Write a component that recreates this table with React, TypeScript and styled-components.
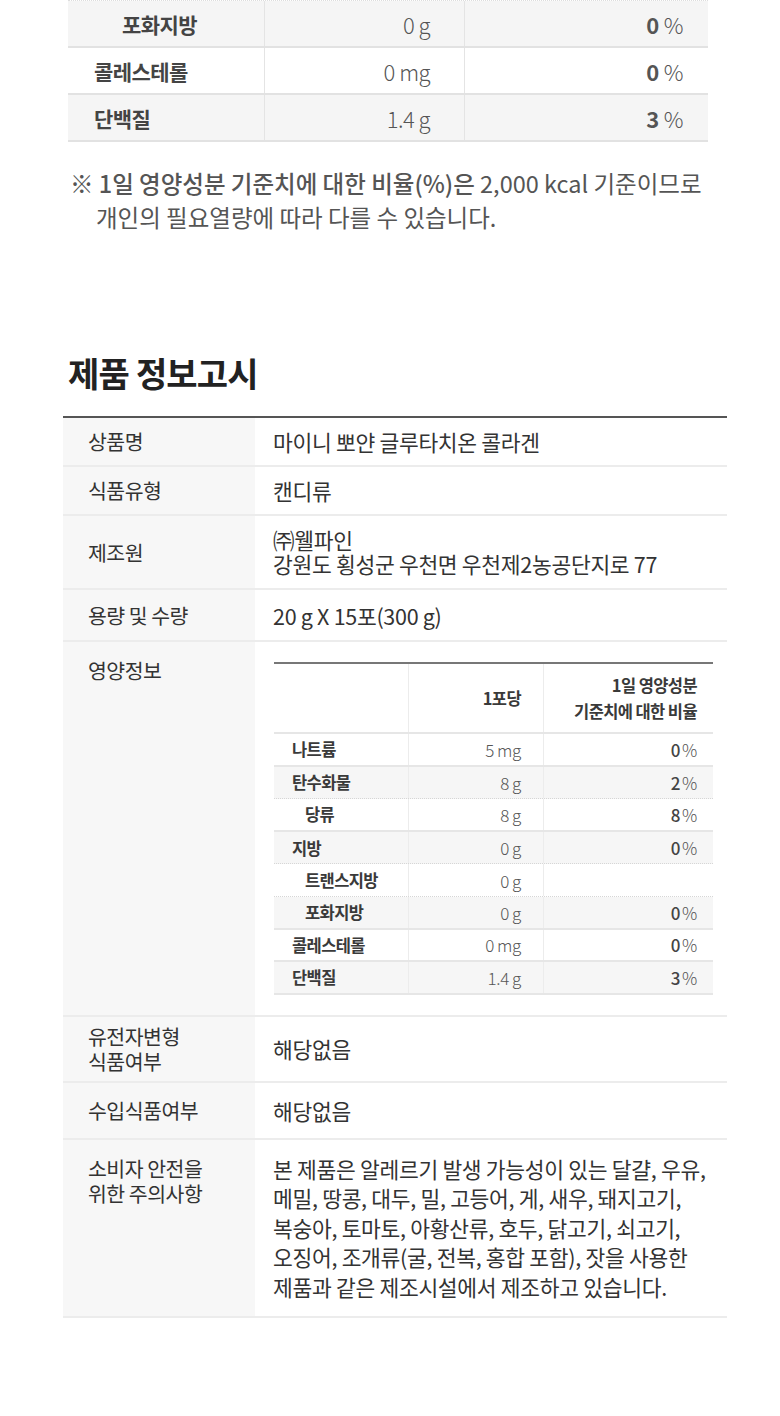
import React from "react";
import styled, { createGlobalStyle, css } from "styled-components";

const Global = createGlobalStyle`
  html, body { margin: 0; padding: 0; background: #fff; }
  body { font-family: "Noto Sans CJK KR", "Noto Sans", sans-serif; color: #333; }
  * { box-sizing: border-box; }
`;

const Page = styled.div`
  width: 780px;
  height: 1416px;
  overflow: hidden;
  background: #fff;
`;

/* ---------- top (continued) nutrition table ---------- */
const TopTable = styled.div`
  margin-left: 68px;
  width: 640px;
  border-top: 1px dotted #ddd;
`;

const TopRow = styled.div<{ $shade?: boolean }>`
  display: grid;
  grid-template-columns: 196px 200px 244px;
  height: 47px;
  background: ${(p) => (p.$shade ? "#f5f5f5" : "#fff")};
  border-bottom: 2px solid #e2e2e2;
`;

const TopLabel = styled.div<{ $indent?: boolean }>`
  display: flex;
  align-items: center;
  padding-left: ${(p) => (p.$indent ? "54px" : "26px")};
  font-size: 21px;
  font-weight: 700;
  color: #444;
  letter-spacing: -0.6px;
`;

const TopValue = styled.div`
  display: flex;
  align-items: center;
  justify-content: flex-end;
  padding-right: 34px;
  border-left: 1px solid #e4e4e4;
  font-size: 22px;
  font-weight: 300;
  color: #555;
  letter-spacing: -0.5px;
`;

const TopPercent = styled(TopValue)`
  padding-right: 25px;
  gap: 5px;
`;

const Strong = styled.span`
  font-weight: 700;
  color: #555;
`;

const Note = styled.p`
  margin: 24px 0 0 70px;
  font-size: 23.5px;
  line-height: 34px;
  color: #555;
  letter-spacing: 0px;
`;

const NoteBold = styled.span`
  font-weight: 500;
`;

const NoteIndent = styled.span`
  display: block;
  padding-left: 26px;
`;

/* ---------- product info ---------- */
const Title = styled.h2`
  margin: 115px 0 0 68px;
  font-size: 34px;
  font-weight: 700;
  color: #222;
  letter-spacing: -0.8px;
  line-height: 48px;
`;

const InfoTable = styled.div`
  margin: 19px 0 0 63px;
  width: 664px;
  border-top: 2px solid #555;
`;

const InfoRow = styled.div<{ $h: number }>`
  display: grid;
  grid-template-columns: 192px 1fr;
  min-height: ${(p) => p.$h}px;
  border-bottom: 2px solid #ececec;
`;

const InfoLabel = styled.div<{ $top?: boolean }>`
  background: #f7f7f7;
  padding-left: 25px;
  display: flex;
  align-items: ${(p) => (p.$top ? "flex-start" : "center")};
  padding-top: ${(p) => (p.$top ? "16px" : "0")};
  font-size: 20.5px;
  line-height: 25px;
  color: #333;
  letter-spacing: -0.5px;
`;

const InfoValue = styled.div<{ $top?: boolean; $lh?: number }>`
  padding-left: 18px;
  display: flex;
  flex-direction: column;
  justify-content: ${(p) => (p.$top ? "flex-start" : "center")};
  padding-top: ${(p) => (p.$top ? "14px" : "0")};
  font-size: 21.5px;
  line-height: ${(p) => p.$lh ?? 25}px;
  color: #333;
  letter-spacing: -0.3px;
  white-space: nowrap;
`;

/* ---------- nested nutrition table ---------- */
const NutriWrap = styled.div`
  padding: 20px 0 20px 19px;
`;

const Nutri = styled.div`
  width: 439px;
  border-top: 2px solid #777;
`;

const NRow = styled.div<{ $shade?: boolean; $dotted?: boolean; $head?: boolean }>`
  display: grid;
  grid-template-columns: 134px 135px 170px;
  height: ${(p) => (p.$head ? "70px" : "32.6px")};
  background: ${(p) => (p.$shade ? "#f6f6f6" : "#fff")};
  border-bottom: ${(p) => (p.$dotted ? "1px dotted #d6d6d6" : "2px solid #e6e6e6")};
`;

const NLabel = styled.div<{ $indent?: boolean }>`
  display: flex;
  align-items: center;
  padding-left: ${(p) => (p.$indent ? "31px" : "18px")};
  font-size: 16.5px;
  font-weight: 700;
  color: #3a3a3a;
  letter-spacing: -0.6px;
`;

const cellDivider = css`
  border-left: 1px solid #ececec;
`;

const NValue = styled.div`
  ${cellDivider};
  display: flex;
  align-items: center;
  justify-content: flex-end;
  padding-right: 22px;
  font-size: 17px;
  font-weight: 300;
  color: #555;
  letter-spacing: -0.3px;
`;

const NPercent = styled(NValue)`
  padding-right: 16px;
  gap: 2px;
`;

const NHead = styled.div`
  ${cellDivider};
  display: flex;
  flex-direction: column;
  align-items: flex-end;
  justify-content: center;
  padding-right: 22px;
  font-size: 16.5px;
  font-weight: 700;
  color: #3a3a3a;
  line-height: 26px;
  letter-spacing: -0.6px;
`;

const NHeadWide = styled(NHead)`
  padding-right: 16px;
`;

const NStrong = styled.span`
  font-weight: 500;
  color: #444;
`;

const Unit = styled.span`
  margin-left: 3px;
`;

type NutriItem = {
  name: string;
  amount: string;
  unit: string;
  pct?: string;
  indent?: boolean;
  shade?: boolean;
  dotted?: boolean;
};

const nutriItems: NutriItem[] = [
  { name: "나트륨", amount: "5", unit: "mg", pct: "0" },
  { name: "탄수화물", amount: "8", unit: "g", pct: "2", shade: true, dotted: true },
  { name: "당류", amount: "8", unit: "g", pct: "8", indent: true },
  { name: "지방", amount: "0", unit: "g", pct: "0", shade: true, dotted: true },
  { name: "트랜스지방", amount: "0", unit: "g", indent: true, dotted: true },
  { name: "포화지방", amount: "0", unit: "g", pct: "0", indent: true, shade: true },
  { name: "콜레스테롤", amount: "0", unit: "mg", pct: "0" },
  { name: "단백질", amount: "1.4", unit: "g", pct: "3", shade: true },
];

const topItems = [
  { name: "포화지방", value: "0 g", pct: "0", indent: true, shade: true },
  { name: "콜레스테롤", value: "0 mg", pct: "0" },
  { name: "단백질", value: "1.4 g", pct: "3", shade: true },
];

export default function App() {
  return (
    <Page>
      <Global />
      <TopTable>
        {topItems.map((r) => (
          <TopRow key={r.name} $shade={r.shade}>
            <TopLabel $indent={r.indent}>{r.name}</TopLabel>
            <TopValue>{r.value}</TopValue>
            <TopPercent>
              <Strong>{r.pct}</Strong>%
            </TopPercent>
          </TopRow>
        ))}
      </TopTable>

      <Note>
        <NoteBold>※ 1일 영양성분 기준치에 대한 비율(%)은</NoteBold> 2,000 kcal 기준이므로
        <NoteIndent>개인의 필요열량에 따라 다를 수 있습니다.</NoteIndent>
      </Note>

      <Title>제품 정보고시</Title>

      <InfoTable>
        <InfoRow $h={49}>
          <InfoLabel>상품명</InfoLabel>
          <InfoValue>마이니 뽀얀 글루타치온 콜라겐</InfoValue>
        </InfoRow>
        <InfoRow $h={49}>
          <InfoLabel>식품유형</InfoLabel>
          <InfoValue>캔디류</InfoValue>
        </InfoRow>
        <InfoRow $h={74}>
          <InfoLabel>제조원</InfoLabel>
          <InfoValue $lh={24}>
            <span>㈜웰파인</span>
            <span>강원도 횡성군 우천면 우천제2농공단지로 77</span>
          </InfoValue>
        </InfoRow>
        <InfoRow $h={52}>
          <InfoLabel>용량 및 수량</InfoLabel>
          <InfoValue>20 g X 15포(300 g)</InfoValue>
        </InfoRow>
        <InfoRow $h={374}>
          <InfoLabel $top>영양정보</InfoLabel>
          <NutriWrap>
            <Nutri>
              <NRow $head>
                <NLabel />
                <NHead>1포당</NHead>
                <NHeadWide>
                  <span>1일 영양성분</span>
                  <span>기준치에 대한 비율</span>
                </NHeadWide>
              </NRow>
              {nutriItems.map((n) => (
                <NRow key={n.name} $shade={n.shade} $dotted={n.dotted}>
                  <NLabel $indent={n.indent}>{n.name}</NLabel>
                  <NValue>
                    {n.amount}
                    <Unit>{n.unit}</Unit>
                  </NValue>
                  <NPercent>
                    {n.pct !== undefined && (
                      <>
                        <NStrong>{n.pct}</NStrong>%
                      </>
                    )}
                  </NPercent>
                </NRow>
              ))}
            </Nutri>
          </NutriWrap>
        </InfoRow>
        <InfoRow $h={66}>
          <InfoLabel>
            유전자변형
            <br />
            식품여부
          </InfoLabel>
          <InfoValue>해당없음</InfoValue>
        </InfoRow>
        <InfoRow $h={57}>
          <InfoLabel>수입식품여부</InfoLabel>
          <InfoValue>해당없음</InfoValue>
        </InfoRow>
        <InfoRow $h={178}>
          <InfoLabel $top>
            소비자 안전을
            <br />
            위한 주의사항
          </InfoLabel>
          <InfoValue $top $lh={29.5}>
            <span>본 제품은 알레르기 발생 가능성이 있는 달걀, 우유,</span>
            <span>메밀, 땅콩, 대두, 밀, 고등어, 게, 새우, 돼지고기,</span>
            <span>복숭아, 토마토, 아황산류, 호두, 닭고기, 쇠고기,</span>
            <span>오징어, 조개류(굴, 전복, 홍합 포함), 잣을 사용한</span>
            <span>제품과 같은 제조시설에서 제조하고 있습니다.</span>
          </InfoValue>
        </InfoRow>
      </InfoTable>
    </Page>
  );
}
